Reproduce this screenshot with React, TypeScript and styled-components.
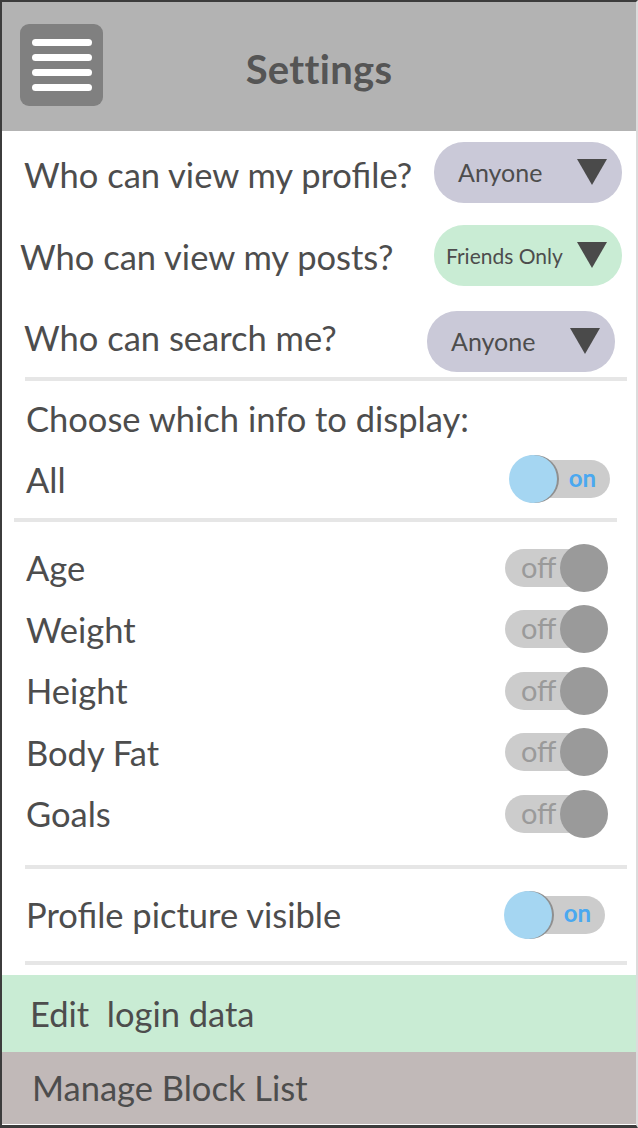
import React from "react";
import styled, { createGlobalStyle } from "styled-components";

const GlobalStyle = createGlobalStyle`
  html, body {
    margin: 0;
    padding: 0;
    background: #ffffff;
  }
  * {
    box-sizing: border-box;
  }
`;

const textColor = "#4d4d4d";
const font = `"Lato", "Open Sans", "DejaVu Sans", sans-serif`;

const Frame = styled.div`
  width: 638px;
  height: 1128px;
  display: flex;
  flex-direction: column;
  border-top: 2px solid #3c3c3c;
  border-left: 2px solid #3c3c3c;
  border-right: 2px solid #dcdcdc;
  border-bottom: 3px solid #3c3c3c;
  font-family: ${font};
  color: ${textColor};
  overflow: hidden;
`;

const Header = styled.header`
  height: 129px;
  flex-shrink: 0;
  background: #b3b3b3;
  display: grid;
  grid-template-columns: 1fr auto 1fr;
  align-items: center;
  padding: 0 18px;
`;

const MenuButton = styled.button`
  width: 83px;
  height: 82px;
  border: none;
  border-radius: 9px;
  background: #808080;
  display: flex;
  flex-direction: column;
  align-items: center;
  justify-content: center;
  gap: 8px;
  padding: 0;
  margin-top: -4px;
`;

const MenuLine = styled.span`
  display: block;
  width: 60px;
  height: 7px;
  border-radius: 4px;
  background: #ffffff;
`;

const Title = styled.h1`
  margin: 0;
  font-size: 40px;
  font-weight: 700;
  color: #555555;
  letter-spacing: 0.3px;
  padding-top: 4px;
`;

const Section = styled.section<{ $pt?: number; $pb?: number }>`
  display: flex;
  flex-direction: column;
  padding-top: ${(p) => p.$pt ?? 0}px;
  padding-bottom: ${(p) => p.$pb ?? 0}px;
`;

const Row = styled.div<{ $h: number; $left?: number; $right?: number }>`
  height: ${(p) => p.$h}px;
  display: flex;
  align-items: center;
  justify-content: space-between;
  padding-left: ${(p) => p.$left ?? 22}px;
  padding-right: ${(p) => p.$right ?? 14}px;
`;

const Label = styled.span<{ $size?: number }>`
  font-size: ${(p) => p.$size ?? 34.5}px;
  white-space: nowrap;
`;

const Dropdown = styled.div<{ $green?: boolean; $small?: boolean; $shift?: number }>`
  width: 188px;
  height: 61px;
  border-radius: 30px;
  background: ${(p) => (p.$green ? "#c9ecd4" : "#cac9d8")};
  display: flex;
  align-items: center;
  justify-content: space-between;
  padding-left: ${(p) => (p.$small ? 12 : 24)}px;
  padding-right: 15px;
  font-size: ${(p) => (p.$small ? 21 : 25)}px;
  color: ${textColor};
  margin-top: ${(p) => p.$shift ?? 0}px;
`;

const Triangle = styled.span`
  width: 0;
  height: 0;
  border-left: 15px solid transparent;
  border-right: 15px solid transparent;
  border-top: 26px solid #4a4a4a;
`;

const Divider = styled.hr<{ $left: number; $right: number; $mt?: number }>`
  height: 4px;
  border: none;
  background: #e6e6e6;
  margin: ${(p) => p.$mt ?? 0}px ${(p) => p.$right}px 0 ${(p) => p.$left}px;
  flex-shrink: 0;
`;

const Track = styled.div<{ $on: boolean }>`
  position: relative;
  width: 100px;
  height: 38px;
  border-radius: 19px;
  background: #cccccc;
  display: flex;
  align-items: center;
  justify-content: ${(p) => (p.$on ? "flex-end" : "flex-start")};
  padding: ${(p) => (p.$on ? "0 14px 0 0" : "0 0 0 16px")};
`;

const Knob = styled.span<{ $on: boolean }>`
  position: absolute;
  top: 50%;
  width: 48px;
  height: 48px;
  margin-top: -24px;
  border-radius: 50%;
  ${(p) =>
    p.$on
      ? `left: -1px; background: #a5d6f2; box-shadow: 2px 0 0 #8f8f8f;`
      : `right: -3px; background: #9a9a9a;`}
`;

const ToggleText = styled.span<{ $on: boolean }>`
  font-size: ${(p) => (p.$on ? 24 : 29)}px;
  font-weight: ${(p) => (p.$on ? 700 : 400)};
  color: ${(p) => (p.$on ? "#4aa8f0" : "#9a9a9a")};
  line-height: 1;
  margin-top: -3px;
`;

const Toggle: React.FC<{ on: boolean }> = ({ on }) => (
  <Track $on={on}>
    <ToggleText $on={on}>{on ? "on" : "off"}</ToggleText>
    <Knob $on={on} />
  </Track>
);

const Band = styled.div<{ $bg: string; $h: number; $left: number }>`
  height: ${(p) => p.$h}px;
  background: ${(p) => p.$bg};
  display: flex;
  align-items: center;
  padding-left: ${(p) => p.$left}px;
  font-size: 34.5px;
  flex-shrink: 0;
`;

const Spacer = styled.div<{ $h: number }>`
  height: ${(p) => p.$h}px;
  flex-shrink: 0;
`;

const infoItems = ["Age", "Weight", "Height", "Body Fat", "Goals"];

export default function App() {
  return (
    <>
      <GlobalStyle />
      <Frame>
        <Header>
          <MenuButton aria-label="menu">
            <MenuLine />
            <MenuLine />
            <MenuLine />
            <MenuLine />
          </MenuButton>
          <Title>Settings</Title>
          <span />
        </Header>

        <Section $pt={2}>
          <Row $h={82}>
            <Label>Who can view my profile?</Label>
            <Dropdown $shift={-4}>
              Anyone
              <Triangle />
            </Dropdown>
          </Row>
          <Row $h={82} $left={18}>
            <Label>Who can view my posts?</Label>
            <Dropdown $green $small $shift={-2}>
              Friends Only
              <Triangle />
            </Dropdown>
          </Row>
          <Row $h={80} $right={21}>
            <Label>Who can search me?</Label>
            <Dropdown $shift={8}>
              Anyone
              <Triangle />
            </Dropdown>
          </Row>
        </Section>
        <Divider $left={23} $right={9} />

        <Section>
          <Row $h={74} $left={24}>
            <Label>Choose which info to display:</Label>
          </Row>
          <Row $h={48} $left={24} $right={26}>
            <Label>All</Label>
            <Toggle on />
          </Row>
        </Section>
        <Divider $left={12} $right={19} $mt={15} />

        <Section $pt={15}>
          {infoItems.map((item) => (
            <Row key={item} $h={61.5} $left={24} $right={31}>
              <Label>{item}</Label>
              <Toggle on={false} />
            </Row>
          ))}
        </Section>
        <Divider $left={23} $right={9} $mt={20} />

        <Row $h={92} $left={24} $right={31}>
          <Label>Profile picture visible</Label>
          <Toggle on />
        </Row>
        <Divider $left={23} $right={9} />
        <Spacer $h={10} />

        <Band $bg="#c9ecd4" $h={77} $left={28}>
          Edit&nbsp; login data
        </Band>
        <Band $bg="#c1b9b8" $h={72} $left={30}>
          Manage Block List
        </Band>
      </Frame>
    </>
  );
}
